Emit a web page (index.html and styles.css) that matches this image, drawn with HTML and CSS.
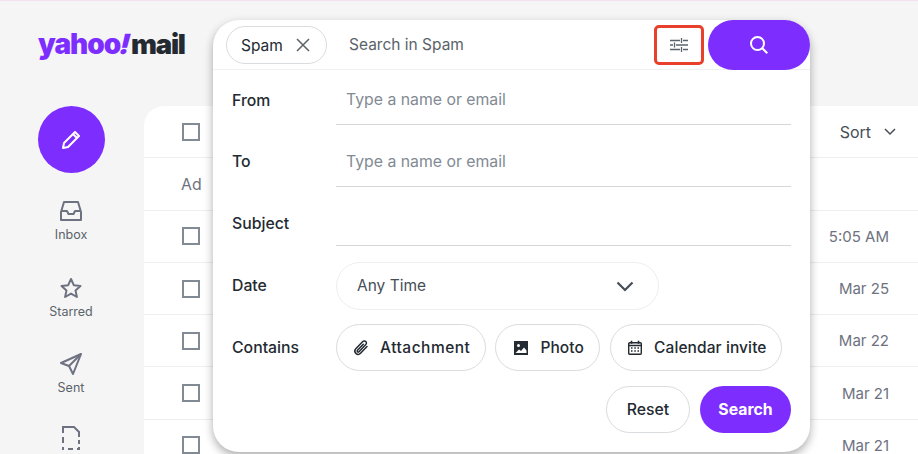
FILE: index.html
```html
<!DOCTYPE html>
<html lang="en">
<head>
<meta charset="utf-8">
<title>Yahoo Mail</title>
<link rel="stylesheet" href="styles.css">
</head>
<body>
<div class="app">
  <header class="top">
    <div class="logo"><span class="logo-y">yahoo<span class="logo-bang">!</span></span><span class="logo-m">mail</span></div>
  </header>
  <div class="body">
    <nav class="side">
      <button class="compose" aria-label="Compose">
        <svg width="24" height="24" viewBox="0 0 24 24" fill="none" stroke="#fff" stroke-width="2" stroke-linejoin="round"><path d="M4 20l1-5L16 4l4 4L9 19z"/><path d="M14 6l4 4"/></svg>
      </button>
      <a class="nav-item nav-inbox">
        <svg width="24" height="22" viewBox="0 0 24 22" fill="none" stroke="#6e7280" stroke-width="2" stroke-linejoin="round"><path d="M2 12l3-10h14l3 10v8H2z"/><path d="M2 11h6l1.5 3h5l1.5-3h6"/></svg>
        <span>Inbox</span>
      </a>
      <a class="nav-item nav-starred">
        <svg width="24" height="24" viewBox="0 0 24 24" fill="none" stroke="#6e7280" stroke-width="2" stroke-linejoin="round"><path d="M12 3l2.8 6.2 6.7.7-5 4.500 1.400 6.600-5.900-3.400-5.900 3.400 1.400-6.600-5-4.500 6.700-.7z"/></svg>
        <span>Starred</span>
      </a>
      <a class="nav-item nav-sent">
        <svg width="24" height="24" viewBox="0 0 24 24" fill="none" stroke="#6e7280" stroke-width="2" stroke-linejoin="round"><path d="M22 2L2 11l8 3 4 8z"/><path d="M22 2L10 14"/></svg>
        <span>Sent</span>
      </a>
      <a class="nav-item nav-draft">
        <svg width="20" height="26" viewBox="0 0 20 26" fill="none" stroke="#6e7280" stroke-width="2"><path d="M2 8V2h11l5 5v5M18 15v4M18 22v2h-2M12 24H7M3 24H2v-2M2 18v-6"/></svg>
      </a>
    </nav>
    <main class="panel">
      <div class="row row-head"><span class="check"></span><span class="sort">Sort <svg width="12" height="8" viewBox="0 0 12 8" fill="none" stroke="#464e56" stroke-width="1.500"><path d="M1 1l5 5 5-5"/></svg></span></div>
      <div class="row row-ad"><span class="ad">Ad</span></div>
      <div class="row"><span class="check"></span><span class="date">5:05 AM</span></div>
      <div class="row"><span class="check"></span><span class="date">Mar 25</span></div>
      <div class="row"><span class="check"></span><span class="date">Mar 22</span></div>
      <div class="row"><span class="check"></span><span class="date">Mar 21</span></div>
      <div class="row"><span class="check"></span><span class="date">Mar 21</span></div>
    </main>
  </div>
</div>

<section class="popup">
  <div class="bar">
    <span class="chip">Spam
      <svg width="14" height="14" viewBox="0 0 14 14" fill="none" stroke="#5b636a" stroke-width="1.500"><path d="M1 1l12 12M13 1L1 13"/></svg>
    </span>
    <span class="bar-text">Search in Spam</span>
    <span class="filter">
      <svg width="18" height="14" viewBox="0 0 18 14" fill="none" stroke="#5b636a" stroke-width="1.300"><path d="M0 2.500h10M13 2.500h5M11.500 0v5M0 7h3M6 7h12M4.500 4.500v5M0 11.500h10M13 11.500h5M11.500 9v5"/></svg>
    </span>
    <button class="go" aria-label="Search">
      <svg width="20" height="20" viewBox="0 0 20 20" fill="none" stroke="#fff" stroke-width="2"><circle cx="8.500" cy="8.500" r="6.500"/><path d="M13.300 13.300l5 5"/></svg>
    </button>
  </div>
  <div class="form">
    <div class="field f-from"><label>From</label><div class="input">Type a name or email</div></div>
    <div class="field f-to"><label>To</label><div class="input">Type a name or email</div></div>
    <div class="field f-subject"><label>Subject</label><div class="input"></div></div>
    <div class="field f-date"><label>Date</label>
      <div class="select"><span>Any Time</span>
        <svg width="18" height="11" viewBox="0 0 18 11" fill="none" stroke="#464e56" stroke-width="2.200"><path d="M1.500 1.500L9 9l7.500-7.500"/></svg>
      </div>
    </div>
    <div class="field f-contains"><label>Contains</label>
      <div class="pills">
        <span class="pill pill-attach">
          <svg width="18" height="18" viewBox="0 0 18 18" fill="none" stroke="#232a31" stroke-width="1.500" stroke-linecap="round"><path d="M15 7.500l-6.500 6.800a3.200 3.200 0 0 1-4.700-4.500l7-7.300a2.100 2.100 0 0 1 3 3L7 12.700a1 1 0 0 1-1.500-1.500l5.800-6"/></svg>
          Attachment</span>
        <span class="pill pill-photo">
          <svg width="16" height="16" viewBox="0 0 16 16"><path fill="#232a31" d="M1 1h14v14H1z"/><circle cx="5.500" cy="5.500" r="1.500" fill="#fff"/><path fill="#fff" d="M2.500 13l3.500-3.500 2 1.500 3-3.500 2.500 3V13z"/></svg>
          Photo</span>
        <span class="pill pill-cal">
          <svg width="16" height="16" viewBox="0 0 16 16" fill="none" stroke="#232a31" stroke-width="1.400"><rect x="1.700" y="2.700" width="12.600" height="11.600" rx="1"/><path d="M1.700 5.500h12.600M4.500 0.700v3M11.500 0.700v3" stroke-width="1.600"/><path d="M4 8h1.500M7.300 8h1.500M10.500 8H12M4 11h1.500M7.300 11h1.500M10.500 11H12" stroke-width="1.500"/></svg>
          Calendar invite</span>
      </div>
    </div>
    <div class="actions">
      <button class="btn-reset">Reset</button>
      <button class="btn-search">Search</button>
    </div>
  </div>
</section>
</body>
</html>
```

FILE: styles.css
```css
* { box-sizing: border-box; }
html, body { margin: 0; padding: 0; height: 100%; overflow: hidden; }
body {
  background: #f5f5f5;
  font-family: Inter, "Liberation Sans", sans-serif;
  color: #232a31;
  font-size: 15px;
  border-top: 1px solid #f3e1ee;
  position: relative;
}
button { font-family: inherit; border: 0; padding: 0; }
.app { display: flex; flex-direction: column; height: 100%; overflow: hidden; }
.top { height: 105px; padding: 25px 0 0 38px; flex: none; }
.logo { font-size: 28px; font-weight: 900; line-height: 36px; letter-spacing: -1px; white-space: nowrap; }
.logo-y { color: #7d2eff; }
.logo-bang { display: inline-block; transform: skewX(-14deg); margin: 0 1px 0 0; }
.logo-m { color: #232a31; font-size: 27.500px; letter-spacing: -1.200px; }
.body { display: flex; flex: 1; min-height: 0; overflow: hidden; }
.side { width: 144px; flex: none; display: flex; flex-direction: column; align-items: center; padding-right: 2px; overflow: hidden; }
.compose {
  width: 67px; height: 67px; border-radius: 50%; background: #7d2eff;
  display: flex; align-items: center; justify-content: center;
  margin-bottom: 27px; flex: none;
}
.nav-item { display: flex; flex-direction: column; align-items: center; font-size: 12.500px; line-height: 16px; color: #5b636a; height: 76px; flex: none; gap: 4px; }
.nav-item svg { flex: none; }
.nav-inbox { gap: 5px; }
.nav-draft { padding-top: 0; margin-top: -3px; }
.panel { flex: 1; background: #fff; border-radius: 20px 0 0 0; overflow: hidden; }
.row {
  height: 52.300px; border-bottom: 1px solid #eceef0;
  display: flex; align-items: center; justify-content: space-between;
  padding: 0 29px 0 38px;
}
.check { width: 18px; height: 18px; border: 2px solid #828a93; flex: none; }
.sort { color: #464e56; font-size: 16px; display: flex; align-items: center; gap: 13px; margin-right: -7px; }
.ad { color: #6e7280; font-size: 15.800px; margin-left: -1px; margin-top: 2px; }
.date { color: #6e7280; font-size: 15px; }

.popup {
  position: absolute; left: 213px; top: 19px; width: 597px; height: 432px;
  background: #fff; border-radius: 26px;
  box-shadow: 0 4px 10px rgba(0,0,0,.32);
}
.bar { height: 50px; display: flex; align-items: center; padding-left: 13px; border-bottom: 1px solid #eef0f2; position: relative; }
.chip {
  height: 38px; width: 101px; border: 1px solid #d9dcdf; border-radius: 19px;
  display: flex; align-items: center; justify-content: space-between;
  padding: 0 16px 0 14px; font-size: 15.500px; flex: none; margin-top: 1px;
}
.bar-text { margin-left: 22px; color: #5b636a; font-size: 15.500px; flex: 1; margin-top: -1px; }
.filter {
  width: 50px; height: 40px; border: 3px solid #e8402a; border-radius: 5px;
  display: flex; align-items: center; justify-content: center; flex: none; margin-right: 4px;
}
.go {
  width: 102px; height: 50px; border-radius: 25px; background: #7d2eff;
  display: flex; align-items: center; justify-content: center; flex: none;
}
.form { padding: 0 19px 0 19px; }
.field { display: flex; }
.field label { width: 104px; flex: none; font-size: 15.800px; font-weight: 450; line-height: 20px; color: #232a31; }
.input { flex: 1; border-bottom: 1px solid #d4d7da; color: #828a93; font-size: 15.800px; line-height: 20px; }
.f-from { padding-top: 20px; }
.f-from .input { height: 35px; padding: 0 0 0 10px; }
.f-from label { padding-top: 1px; line-height: 20px; }
.f-to { padding-top: 27px; }
.f-to .input { height: 35px; padding: 0 0 0 10px; }
.f-to label { padding-top: 0; }
.f-subject { padding-top: 26px; }
.f-subject .input { height: 33px; }
.f-subject label { padding-top: 1px; }
.f-date { padding-top: 16px; align-items: center; }
.select {
  width: 323px; height: 48px; border: 1px solid #eceef0; border-radius: 24px;
  display: flex; align-items: center; justify-content: space-between;
  padding: 0 24px 0 20px; color: #464e56; font-size: 15.500px;
}
.select span { margin-top: -2px; }
.f-contains { padding-top: 14px; align-items: center; }
.pills { display: flex; gap: 9px; }
.pill {
  height: 47px; border: 1px solid #d9dcdf; border-radius: 24px;
  display: flex; align-items: center; font-size: 15.500px; font-weight: 500;
  letter-spacing: .1px; white-space: nowrap;
}
.pill-attach { gap: 10px; padding: 0 15px; letter-spacing: .5px; }
.pill-photo { gap: 11px; padding: 0 15px 0 17px; }
.pill-cal { gap: 11px; padding: 0 14px 0 16px; margin-left: 1px; }
.actions { display: flex; justify-content: flex-end; gap: 10px; padding-top: 15px; }
.btn-reset, .btn-search { height: 47px; border-radius: 24px; font-size: 15.800px; font-weight: 500; }
.btn-reset { width: 84px; background: #fff; border: 1px solid #d9dcdf; color: #232a31; }
.btn-search { width: 91px; background: #7d2eff; color: #fff; font-weight: 700; }
```
